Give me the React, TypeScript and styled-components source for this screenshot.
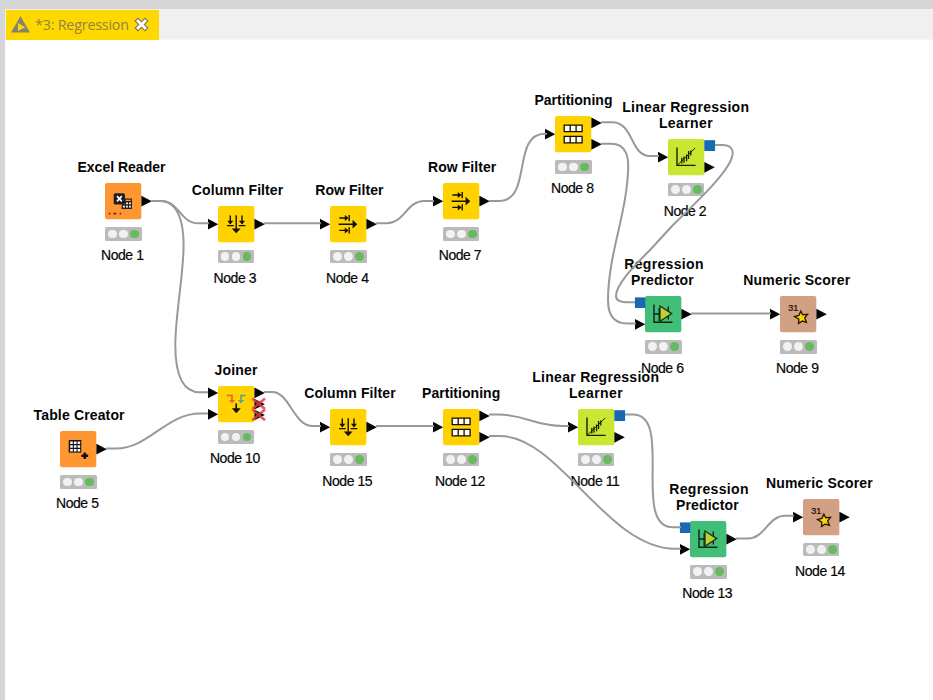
import React from "react";
import styled, { createGlobalStyle } from "styled-components";

const GlobalStyle = createGlobalStyle`
  *, *::before, *::after { box-sizing: border-box; }
  body { margin: 0; background: #fff; overflow: hidden; }
`;

const Workbench = styled.div`
  width: 933px;
  height: 700px;
  display: flex;
  flex-direction: column;
  border-top: 9px solid #d6d6d6;
  border-left: 5px solid #d6d6d6;
  background: #fff;
  overflow: hidden;
`;

const TabStrip = styled.div`
  flex: none;
  height: 31px;
  padding: 1px 0 0 1px;
  display: flex;
  background: #f0f0f0;
  border-bottom: 1px solid #f7f7f7;
`;

const Tab = styled.div`
  width: 153px;
  height: 29.5px;
  padding-left: 5px;
  display: flex;
  align-items: center;
  background: #ffd800;
`;

const TabLabel = styled.span`
  width: 93px;
  margin-left: 5px;
  font: 14.3px/20px "Open Sans", "Noto Sans", sans-serif;
  letter-spacing: -0.2px;
  white-space: nowrap;
  color: #8f8445;
`;

const CloseIcon = styled.svg`
  margin-left: 6px;
`;

const Canvas = styled.main`
  position: relative;
  flex: 1;
  overflow: hidden;
`;

const Connections = styled.svg`
  position: absolute;
  inset: 0;
`;

const NodeBox = styled.div<{ $x: number; $y: number }>`
  position: absolute;
  left: ${(p) => p.$x - 5}px;
  top: ${(p) => p.$y - 80}px;
  width: 36.3px;
  display: flex;
  flex-direction: column;
  align-items: center;
  font-family: "Liberation Sans", Arial, sans-serif;
  font-size: 14px;
  line-height: 16px;
  white-space: nowrap;
  color: #050505;
`;

const Title = styled.div`
  height: 32px;
  margin-bottom: 8px;
  display: flex;
  flex-direction: column;
  justify-content: flex-end;
  align-items: center;
  font-weight: 700;
`;

const TitleLine = styled.span<{ $spacing: number; $shift: number }>`
  letter-spacing: ${(p) => p.$spacing}px;
  transform: translateX(${(p) => p.$shift}px);
`;

const Face = styled.svg`
  display: block;
  flex: none;
  overflow: visible;
`;

const Status = styled.div`
  width: 36.3px;
  height: 13.6px;
  margin-top: 7.7px;
  padding: 0 2.8px;
  display: flex;
  align-items: center;
  justify-content: space-between;
  background: #bbb;
  border-radius: 1.5px;
`;

const Lamp = styled.i<{ $on?: boolean }>`
  width: 8.8px;
  height: 8.8px;
  border-radius: 50%;
  background: ${(p) => (p.$on ? "#66bb5c" : "#f2f2f2")};
`;

const Name = styled.div`
  margin-top: 6.5px;
  letter-spacing: -0.45px;
  -webkit-text-stroke: 0.2px #050505;
  transform: translateX(-1.2px);
`;

type Kind =
  | "excel" | "table" | "column" | "row" | "partition"
  | "learner" | "predictor" | "scorer" | "joiner";

const FILL: Record<Kind, string> = {
  excel: "#ff9632",
  table: "#ff9632",
  column: "#ffd200",
  row: "#ffd200",
  partition: "#ffd200",
  joiner: "#ffd200",
  learner: "#c8e632",
  predictor: "#41be78",
  scorer: "#d2a082",
};

function Glyph({ kind }: { kind: Kind }) {
  switch (kind) {
    case "excel":
      return (
        <g>
          <path d="M17.5 15.5h9.5v10.5h-10.5z" fill="#222" />
          <path d="M18 19.5h2v1.8h-2zm3 0h2v1.8h-2zm3 0h2v1.8h-2zM18 22.7h2v1.8h-2zm3 0h2v1.8h-2zm3 0h2v1.8h-2z" fill="#f6e9dc" />
          <path d="M20.5 16.7h5.3v1.3h-5.3z" fill="#ff9632" />
          <rect x="8.7" y="10.2" width="11.3" height="11.3" rx="1.6" fill="#1e1e24" />
          <path d="M12 13.2l4.8 5.2M16.8 13.2L12 18.4" stroke="#fff" strokeWidth="1.7" />
          <path d="M3.8 30.6h1.6M8.3 30.6h3M14.6 30.6h1.4" stroke="#5a3512" strokeWidth="1.6" />
        </g>
      );
    case "table":
      return (
        <g>
          <rect x="8.7" y="9" width="12.6" height="12.6" fill="#111" />
          <path d="M10.2 10.5h2.6v2.6h-2.6zm3.7 0h2.6v2.6h-2.6zm3.7 0h2.6v2.6h-2.6zM10.2 14.2h2.6v2.6h-2.6zm3.7 0h2.6v2.6h-2.6zm3.7 0h2.6v2.6h-2.6zM10.2 17.9h2.6v2.6h-2.6zm3.7 0h2.6v2.6h-2.6zm3.7 0h2.6v2.6h-2.6z" fill="#fff" />
          <path d="M24.8 21.4v6.6M21.4 24.7h6.8" stroke="#111" strokeWidth="2.5" />
        </g>
      );
    case "column":
      return (
        <g stroke="#151100" fill="#151100">
          <path d="M12.3 9.5v8M24 9.5v8M9 19.6h6.7M20.7 19.6h6.7M18.2 9.3v15" strokeWidth="1.4" fill="none" />
          <path d="M9.3 14.8h6l-3 3.8zM21 14.8h6l-3 3.8zM13.8 22.6h8.8l-4.4 4.6z" stroke="none" />
        </g>
      );
    case "row":
      return (
        <g stroke="#151100" fill="#151100">
          <path d="M9.3 12h8M9.3 24.4h8M19.2 9v6.2M19.2 21.3v6.2M8.6 18.2h16" strokeWidth="1.4" fill="none" />
          <path d="M14.8 9v6l3.8-3zM14.8 21.4v6l3.8-3zM22.6 13.8v8.8l4.7-4.4z" stroke="none" />
        </g>
      );
    case "partition":
      return (
        <g fill="#fffdf2" stroke="#151100" strokeWidth="1.3">
          {[9.2, 20.4].map((y) => (
            <path key={y} d={`M9.2 ${y}h17.9v6.4H9.2zM15.2 ${y}v6.4M21.1 ${y}v6.4`} />
          ))}
        </g>
      );
    case "joiner":
      return (
        <g>
          <path d="M9 9.4h5v6" fill="none" stroke="#ec5a40" strokeWidth="1.5" />
          <path d="M11 14h6L14 17.2z" fill="#ec5a40" />
          <path d="M27.4 9.4H23v6" fill="none" stroke="#4aa09a" strokeWidth="1.5" />
          <path d="M20 14h6L23 17.2z" fill="#4aa09a" />
          <path d="M18.2 17.4v7" stroke="#111" strokeWidth="1.6" />
          <path d="M13.8 22.2h9l-4.5 5z" fill="#111" />
        </g>
      );
    case "learner":
      return (
        <g fill="none" stroke="#182000">
          <path d="M9 8.6v17.8h18.6" strokeWidth="1.4" />
          <path d="M9.6 26L27.2 9" strokeWidth="1" />
          <path d="M13.8 18.8v5.6M16 17.4v6.4M18.6 15.6v6.6M20.6 12v8M22.8 11.5v5" strokeWidth="1.3" />
        </g>
      );
    case "predictor":
      return (
        <g>
          <path d="M9 8.6v17.6h18.4M9 18h6M14.2 12v13M23.3 10.6v13" fill="none" stroke="#06280f" strokeWidth="1.4" />
          <path d="M15 10l11.7 7.6L15 25.2z" fill="#bfd032" stroke="#1b3510" strokeWidth="1.3" />
        </g>
      );
    case "scorer":
      return (
        <g>
          <text x="8.2" y="15" fontSize="8.6" textLength="10" lengthAdjust="spacingAndGlyphs" fill="#1c120c" stroke="#1c120c" strokeWidth=".25">31</text>
          <path d="M20.9 15.2l1.8 3.5 4.8-.4-2.8 3.6 1.7 4.5-4-1.4-3.8 2.4.2-4.3-4.2-2.5 4.3-1.2z" fill="#ffd608" stroke="#2b1d05" strokeWidth="1.4" />
        </g>
      );
  }
}

// Port rows are vertical offsets from the top edge of the node face.
const C = 18.2;
const HI = 6.9;
const LO = 28.3;

function Ports({ kind }: { kind: Kind }) {
  const input = (y: number) => <path key={"i" + y} d={`M-10 ${y - 5.4}L0.2 ${y}L-10 ${y + 5.4}z`} />;
  const output = (y: number) => <path key={"o" + y} d={`M36.4 ${y - 5.4}L46.8 ${y}L36.4 ${y + 5.4}z`} />;
  const ins = kind === "excel" || kind === "table" ? [] : kind === "joiner" ? [HI, LO] : kind === "predictor" ? [LO] : [C];
  const outs = kind === "partition" ? [HI, LO] : kind === "learner" ? [LO] : kind === "joiner" ? [HI, C, LO + 0.6] : [C];
  return (
    <g fill="#050505">
      {ins.map(input)}
      {outs.map(output)}
      {kind === "learner" && <rect x="36.3" y="1.2" width="10.8" height="10.8" fill="#1869b4" />}
      {kind === "predictor" && <rect x="-10.1" y="1.4" width="10.4" height="10.6" fill="#1869b4" />}
      {kind === "joiner" && (
        <path d="M34.4 12.4L47 23M47 12.4L34.4 23M34.4 23.6L47 34.2M47 23.6L34.4 34.2" stroke="#e03d42" strokeOpacity=".85" strokeWidth="2.6" />
      )}
    </g>
  );
}

interface Line { text: string; spacing: number; shift?: number }
interface FlowNode { id: number; kind: Kind; x: number; y: number; title: Line[] }

const columnFilter: Line = { text: "Column Filter", spacing: 0.1, shift: 1.5 };
const rowFilter: Line = { text: "Row Filter", spacing: 0.05, shift: 1 };
const partitioning: Line = { text: "Partitioning", spacing: 0.03, shift: 0 };
const learner: Line[] = [
  { text: "Linear Regression", spacing: 0.29, shift: -0.4 },
  { text: "Learner", spacing: 0.38, shift: -0.2 },
];
const predictor: Line[] = [
  { text: "Regression", spacing: 0.33, shift: 0.6 },
  { text: "Predictor", spacing: 0.17, shift: -1 },
];
const scorer: Line = { text: "Numeric Scorer", spacing: 0.2, shift: -1.7 };

const NODES: FlowNode[] = [
  { id: 1, kind: "excel", x: 105.3, y: 183.3, title: [{ text: "Excel Reader", spacing: 0, shift: -2 }] },
  { id: 3, kind: "column", x: 217.9, y: 205.9, title: [columnFilter] },
  { id: 4, kind: "row", x: 330.3, y: 205.9, title: [rowFilter] },
  { id: 7, kind: "row", x: 443, y: 183.3, title: [rowFilter] },
  { id: 8, kind: "partition", x: 555.3, y: 116.2, title: [partitioning] },
  { id: 2, kind: "learner", x: 668, y: 138.6, title: learner },
  { id: 6, kind: "predictor", x: 645.3, y: 296, title: predictor },
  { id: 9, kind: "scorer", x: 780.3, y: 296, title: [scorer] },
  { id: 10, kind: "joiner", x: 217.9, y: 386.2, title: [{ text: "Joiner", spacing: 0.2, shift: 0 }] },
  { id: 5, kind: "table", x: 60.3, y: 431.2, title: [{ text: "Table Creator", spacing: 0.15, shift: 0.7 }] },
  { id: 15, kind: "column", x: 330.3, y: 408.6, title: [columnFilter] },
  { id: 12, kind: "partition", x: 443, y: 408.6, title: [partitioning] },
  { id: 11, kind: "learner", x: 578, y: 408.6, title: learner },
  { id: 13, kind: "predictor", x: 690.3, y: 521.1, title: predictor },
  { id: 14, kind: "scorer", x: 803, y: 498.6, title: [scorer] },
];

const LINKS = [
  "M151 201H162C178 201 181 223.3 198 223.3H209",
  "M151 201H160C178 201 183.6 222 183.6 245C183.6 275 175.3 315 175.3 345C175.3 373 182 392.3 200 392.3H208",
  "M264 223.3H321",
  "M376 223.3H387C404 223.3 407 200.9 424 200.9H434",
  "M489 200.9H499C533 200.9 511 133.7 545 133.7H547",
  "M601 122.3H612C634 122.3 630 156 650 156H659",
  "M601 143.8H611C627 143.8 629 158 628 172C627 195 623 210 619.5 226C614 250 608 275 608 300C608 314 613 323.5 627 323.5H636",
  "M715 145H722C732 145 734 151 732 157C728 172 700 199 673 225L650 250C632 268 616 285 616 296C616 301 622 302.3 628 302.3H635",
  "M691 313.4H771",
  "M106 448.5H116C149 448.5 166 413.5 200 413.5H208",
  "M264 392H272C290 392 293 426 313 426H321",
  "M376 426H434",
  "M489 414.6H498C526 414.6 534 426 563 426H569",
  "M489 436H500C559 436 607 548.7 675 548.7H681",
  "M625 414.5H633C674 414.5 631 527.3 673 527.3H681",
  "M736 538.4H748C765 538.4 768 515.8 785 515.8H794",
];

export default function App() {
  return (
    <>
      <GlobalStyle />
      <Workbench>
        <TabStrip>
          <Tab>
            <svg width="19" height="17" viewBox="0 0 19 17">
              <path d="M9.5 0L19 16.5H0z" fill="#858275" />
              <path d="M7 7l7.2 4.2L7 15z" fill="#ffd800" />
            </svg>
            <TabLabel>*3: Regression</TabLabel>
            <CloseIcon width="15" height="15" viewBox="0 0 15 15">
              <path d="M2.2 2.2l10.6 10.6M12.8 2.2L2.2 12.8" stroke="#777052" strokeWidth="5" />
              <path d="M3 3l9 9M12 3l-9 9" stroke="#fff" strokeWidth="2.9" />
            </CloseIcon>
          </Tab>
        </TabStrip>
        <Canvas>
          {NODES.map((n) => (
            <NodeBox key={n.id} $x={n.x} $y={n.y}>
              <Title>
                {n.title.map((l) => (
                  <TitleLine key={l.text} $spacing={l.spacing} $shift={l.shift ?? 0}>{l.text}</TitleLine>
                ))}
              </Title>
              <Face width="36.3" height="36.3" viewBox="0 0 36.3 36.3">
                <rect width="36.3" height="36.3" rx="2" fill={FILL[n.kind]} />
                <Glyph kind={n.kind} />
                <Ports kind={n.kind} />
              </Face>
              <Status>
                <Lamp />
                <Lamp />
                <Lamp $on />
              </Status>
              <Name>Node {n.id}</Name>
            </NodeBox>
          ))}
          <Connections width="928" height="660" viewBox="5 40 928 660">
            <g fill="none" stroke="#999" strokeWidth="2">
              {LINKS.map((d) => <path key={d} d={d} />)}
            </g>
          </Connections>
        </Canvas>
      </Workbench>
    </>
  );
}
